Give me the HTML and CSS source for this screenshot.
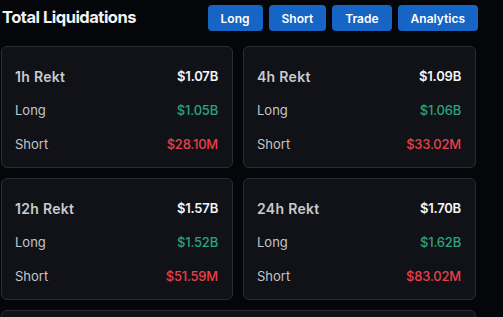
FILE: index.html
```html
<!DOCTYPE html>
<html lang="en">
<head>
  <meta charset="UTF-8">
  <meta name="viewport" content="width=device-width, initial-scale=1.0">
  <title>Total Liquidations</title>
  <link rel="stylesheet" href="styles.css">
</head>
<body>
  <div class="liq-container">
    <div class="liq-header">
      <h1>Total Liquidations</h1>
      <div class="liq-tabs">
        <button>Long</button>
        <button>Short</button>
        <button>Trade</button>
        <button>Analytics</button>
      </div>
    </div>

    <div class="liq-grid">
      <div class="liq-card">
        <div class="liq-row head"><span>1h Rekt</span><span class="val">$1.07B</span></div>
        <div class="liq-row"><span>Long</span><span class="val up">$1.05B</span></div>
        <div class="liq-row"><span>Short</span><span class="val down">$28.10M</span></div>
      </div>
      <div class="liq-card">
        <div class="liq-row head"><span>4h Rekt</span><span class="val">$1.09B</span></div>
        <div class="liq-row"><span>Long</span><span class="val up">$1.06B</span></div>
        <div class="liq-row"><span>Short</span><span class="val down">$33.02M</span></div>
      </div>
      <div class="liq-card">
        <div class="liq-row head"><span>12h Rekt</span><span class="val">$1.57B</span></div>
        <div class="liq-row"><span>Long</span><span class="val up">$1.52B</span></div>
        <div class="liq-row"><span>Short</span><span class="val down">$51.59M</span></div>
      </div>
      <div class="liq-card">
        <div class="liq-row head"><span>24h Rekt</span><span class="val">$1.70B</span></div>
        <div class="liq-row"><span>Long</span><span class="val up">$1.62B</span></div>
        <div class="liq-row"><span>Short</span><span class="val down">$83.02M</span></div>
      </div>
      <div class="liq-card wide"></div>
    </div>
  </div>
</body>
</html>
```

FILE: styles.css
```css
body {
  font-family: 'Inter', 'Noto Sans', sans-serif;
  background-color: #05060a;
  margin: 0;
  padding: 0;
  overflow: hidden;
}
.liq-container {
  width: 476px;
  padding: 5px 0 0 1px;
}
.liq-header {
  display: flex;
  justify-content: space-between;
  align-items: center;
  height: 26px;
  margin-bottom: 15px;
}
h1 {
  margin: -2px 0 0 1px;
  font-size: 16.5px;
  font-weight: 700;
  color: #f2f3f5;
  letter-spacing: -0.5px;
}
.liq-tabs {
  display: flex;
  gap: 6px;
  margin-right: -1px;
}
.liq-tabs button {
  height: 26px;
  padding: 0 13px;
  background-color: #1664c4;
  color: #fff;
  border: none;
  border-radius: 4px;
  font-family: inherit;
  font-size: 12px;
  font-weight: 600;
  cursor: pointer;
}
.liq-tabs button:hover {
  background-color: #1a70d8;
}
.liq-grid {
  display: grid;
  grid-template-columns: 232px 233px;
  column-gap: 10px;
  row-gap: 10px;
}
.liq-card {
  background-color: #101217;
  border: 1px solid #2a2d33;
  border-radius: 6px;
  padding: 12px 14px 7px 13px;
  height: 101px;
}
.liq-card.wide {
  grid-column: 1 / 3;
  height: 40px;
}
.liq-row {
  display: flex;
  justify-content: space-between;
  align-items: center;
  height: 34px;
  font-size: 13px;
  color: #c4c6ca;
}
.liq-row.head {
  font-size: 14px;
  font-weight: 600;
  color: #c9cbcf;
  letter-spacing: 0.3px;
}
.val {
  color: #f4f5f7;
  font-size: 13px;
  font-weight: 600;
  letter-spacing: -0.2px;
}
.liq-row .val.up {
  color: #2ba37d;
  font-weight: 500;
}
.liq-row .val.down {
  color: #e8404a;
  font-weight: 500;
}
```
